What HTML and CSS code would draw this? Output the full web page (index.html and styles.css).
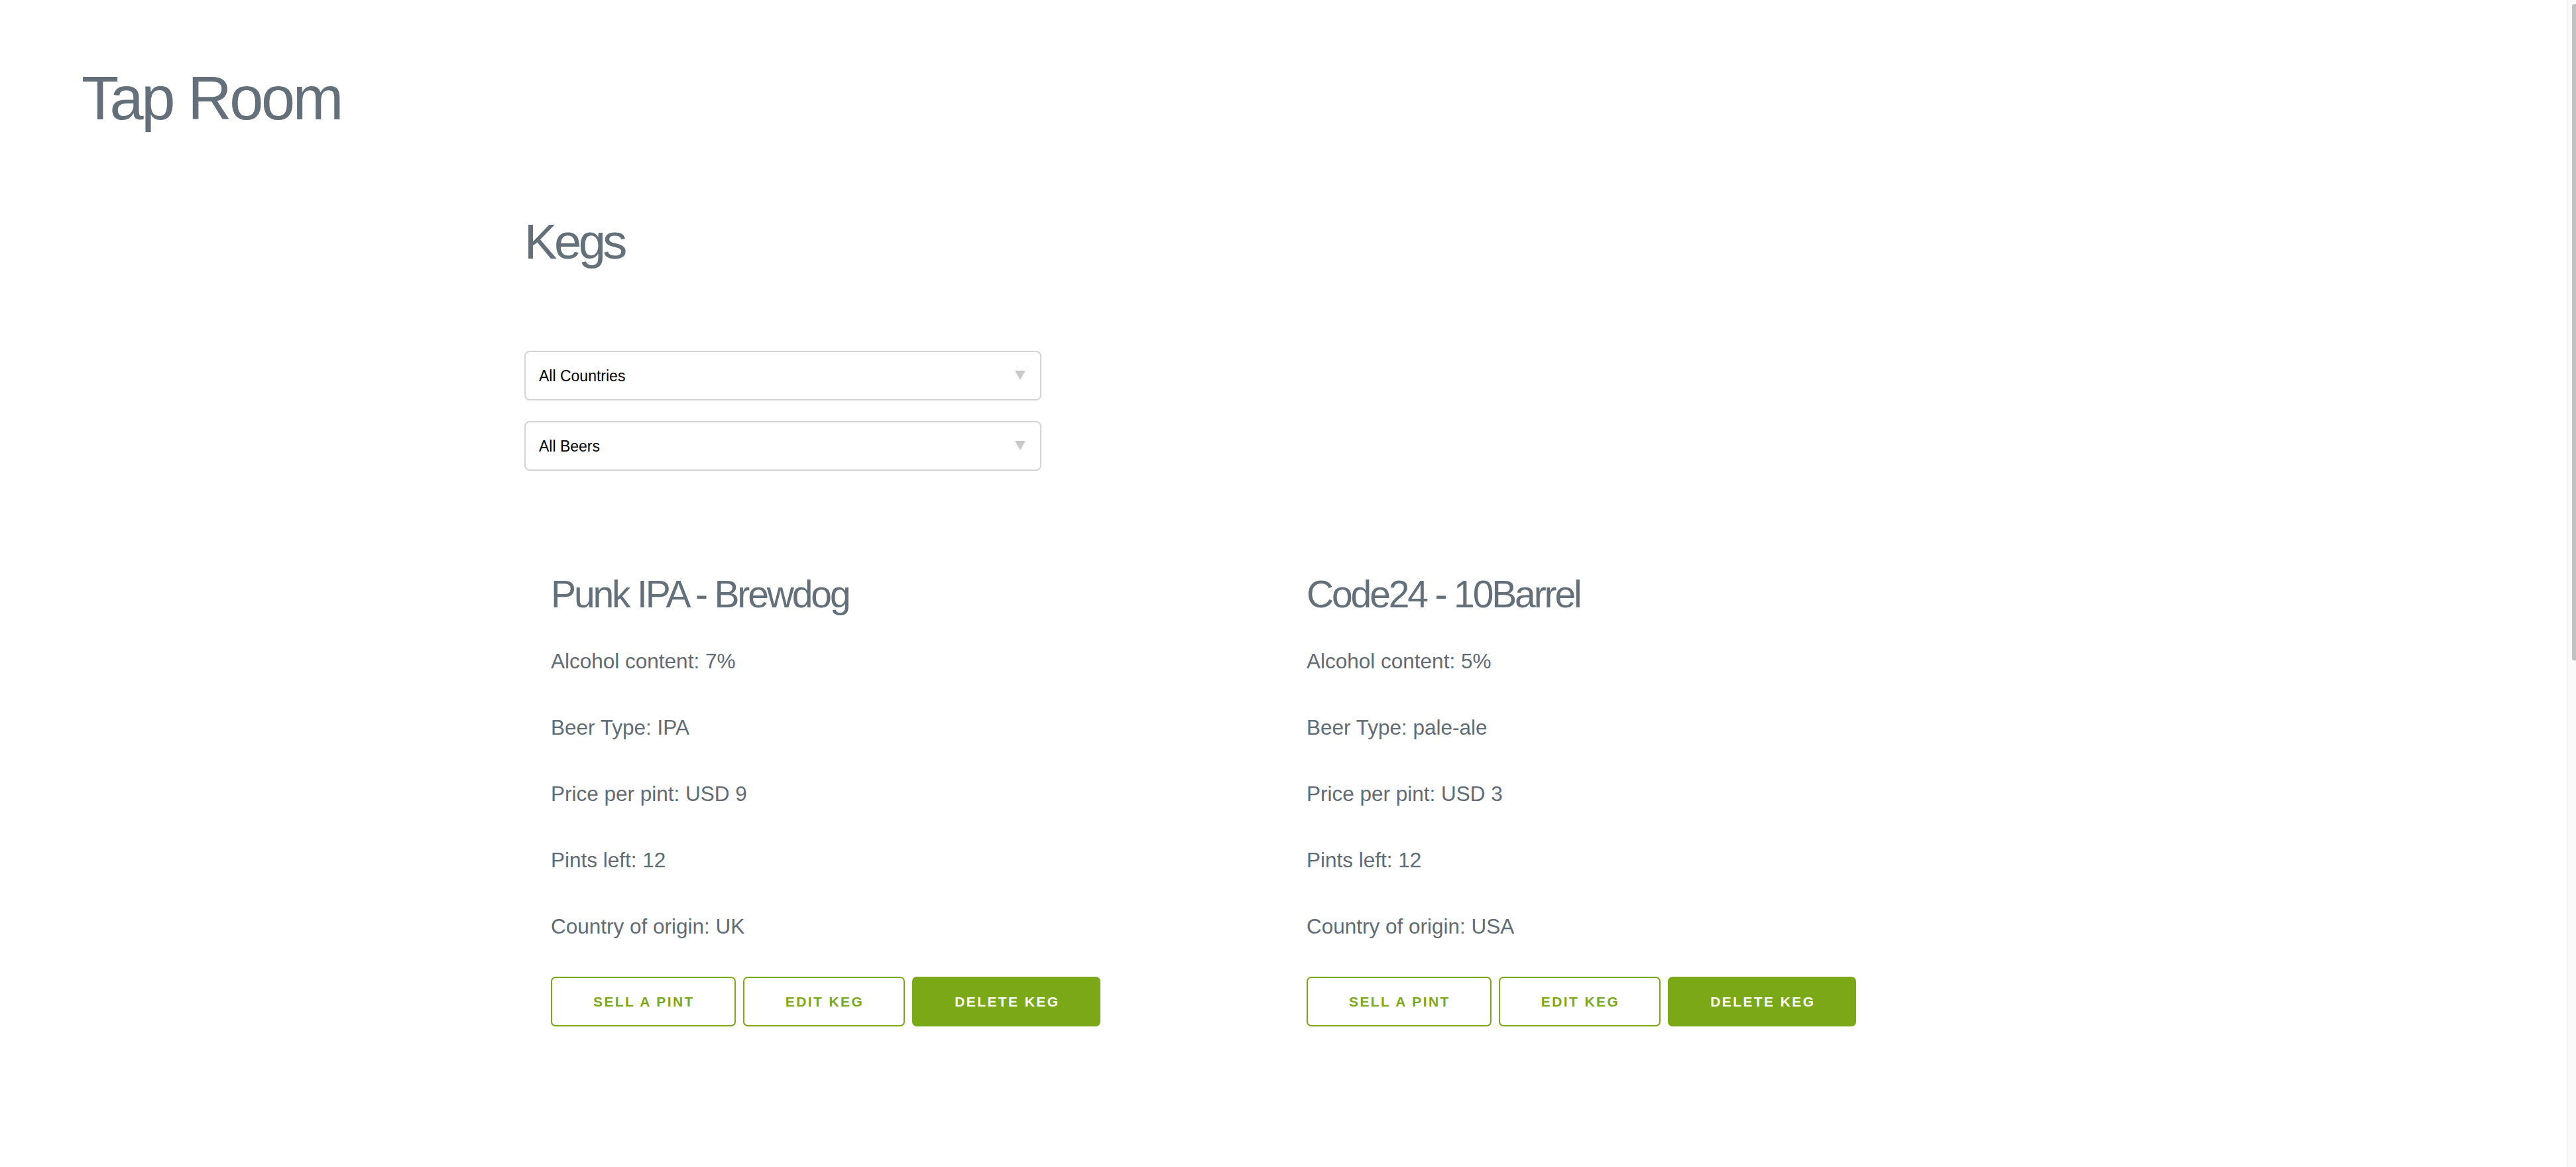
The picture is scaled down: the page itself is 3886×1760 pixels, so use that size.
FILE: index.html
```html
<!DOCTYPE html>
<html lang="en">
<head>
<meta charset="utf-8">
<title>Tap Room</title>
<link rel="stylesheet" href="styles.css">
</head>
<body>
<div class="app">
  <header class="site-header">
    <h1 class="brand">Tap Room</h1>
  </header>
  <main class="kegs">
    <h2 class="kegs-title">Kegs</h2>
    <div class="filters">
      <div class="select-wrap">
        <select class="filter">
          <option>All Countries</option>
          <option>UK</option>
          <option>USA</option>
        </select>
        <svg class="caret" viewBox="0 0 16 14" width="16" height="14" aria-hidden="true"><polygon points="0,0 16,0 8,14" fill="#c9c9c9"/></svg>
      </div>
      <div class="select-wrap">
        <select class="filter">
          <option>All Beers</option>
          <option>IPA</option>
          <option>pale-ale</option>
        </select>
        <svg class="caret" viewBox="0 0 16 14" width="16" height="14" aria-hidden="true"><polygon points="0,0 16,0 8,14" fill="#c9c9c9"/></svg>
      </div>
    </div>
    <div class="keg-list">
      <article class="keg">
        <h3 class="keg-name">Punk IPA - Brewdog</h3>
        <p class="keg-line">Alcohol content: 7%</p>
        <p class="keg-line">Beer Type: IPA</p>
        <p class="keg-line">Price per pint: USD 9</p>
        <p class="keg-line">Pints left: 12</p>
        <p class="keg-line">Country of origin: UK</p>
        <div class="keg-actions">
          <button class="btn btn-outline">Sell a pint</button>
          <button class="btn btn-outline">Edit keg</button>
          <button class="btn btn-solid">Delete keg</button>
        </div>
      </article>
      <article class="keg">
        <h3 class="keg-name">Code24 - 10Barrel</h3>
        <p class="keg-line">Alcohol content: 5%</p>
        <p class="keg-line">Beer Type: pale-ale</p>
        <p class="keg-line">Price per pint: USD 3</p>
        <p class="keg-line">Pints left: 12</p>
        <p class="keg-line">Country of origin: USA</p>
        <div class="keg-actions">
          <button class="btn btn-outline">Sell a pint</button>
          <button class="btn btn-outline">Edit keg</button>
          <button class="btn btn-solid">Delete keg</button>
        </div>
      </article>
    </div>
  </main>
</div>
<div class="scrollbar" aria-hidden="true"><div class="scrollbar-thumb"></div></div>
</body>
</html>
```

FILE: styles.css
```css
html, body {
  margin: 0;
  padding: 0;
  background: #ffffff;
}

body {
  font-family: "Liberation Sans", Arial, sans-serif;
  color: #5f6b75;
}

.scrollbar {
  position: fixed;
  top: 0;
  right: 0;
  bottom: 0;
  width: 13px;
  background: #fafafa;
  border-left: 1px solid #e6e6e6;
}

.scrollbar-thumb {
  position: absolute;
  top: 6px;
  left: 7px;
  right: 0;
  height: 990px;
  background: #c1c1c1;
  border-radius: 4px 0 0 4px;
}

.site-header {
  padding: 98px 0 0 123px;
}

.brand {
  margin: 0;
  font-size: 92px;
  line-height: 101px;
  font-weight: 400;
  letter-spacing: -0.037em;
  color: #636f79;
}

.kegs {
  margin-left: 791px;
}

.kegs-title {
  margin: 125px 0 0 0;
  font-size: 74px;
  line-height: 81px;
  font-weight: 400;
  letter-spacing: -0.06em;
  color: #636f79;
}

.filters {
  margin-top: 124px;
  display: flex;
  flex-direction: column;
  gap: 31px;
}

.select-wrap {
  position: relative;
  width: 780px;
  height: 75px;
}

.filter {
  appearance: none;
  -webkit-appearance: none;
  box-sizing: border-box;
  width: 100%;
  height: 100%;
  margin: 0;
  padding: 0 60px 0 20px;
  border: 2px solid #d4d4d4;
  border-radius: 8px;
  background: #ffffff;
  font-family: "Liberation Sans", Arial, sans-serif;
  font-size: 23px;
  color: #000000;
}

.caret {
  position: absolute;
  right: 24px;
  top: 30px;
  pointer-events: none;
}

.keg-list {
  margin-top: 155px;
  display: grid;
  grid-template-columns: 1140px 1140px;
}

.keg {
  padding-left: 40px;
}

.keg-name {
  margin: 0 0 19px 0;
  font-size: 57px;
  line-height: 63px;
  font-weight: 400;
  letter-spacing: -0.055em;
  color: #636f79;
}

.keg-line {
  margin: 0;
  font-size: 31.5px;
  line-height: 100px;
  color: #5f6b75;
}

.keg-actions {
  margin-top: 26px;
  display: flex;
  gap: 11px;
}

.btn {
  box-sizing: border-box;
  height: 75px;
  padding: 0 60px 0 62px;
  border: 2px solid #7aa816;
  border-radius: 7px;
  font-family: "Liberation Sans", Arial, sans-serif;
  font-size: 21px;
  font-weight: 700;
  letter-spacing: 2.4px;
  text-transform: uppercase;
  cursor: pointer;
}

.btn-outline {
  background: #ffffff;
  color: #7aa816;
}

.btn-solid {
  background: #7aa816;
  color: #ffffff;
}
```
